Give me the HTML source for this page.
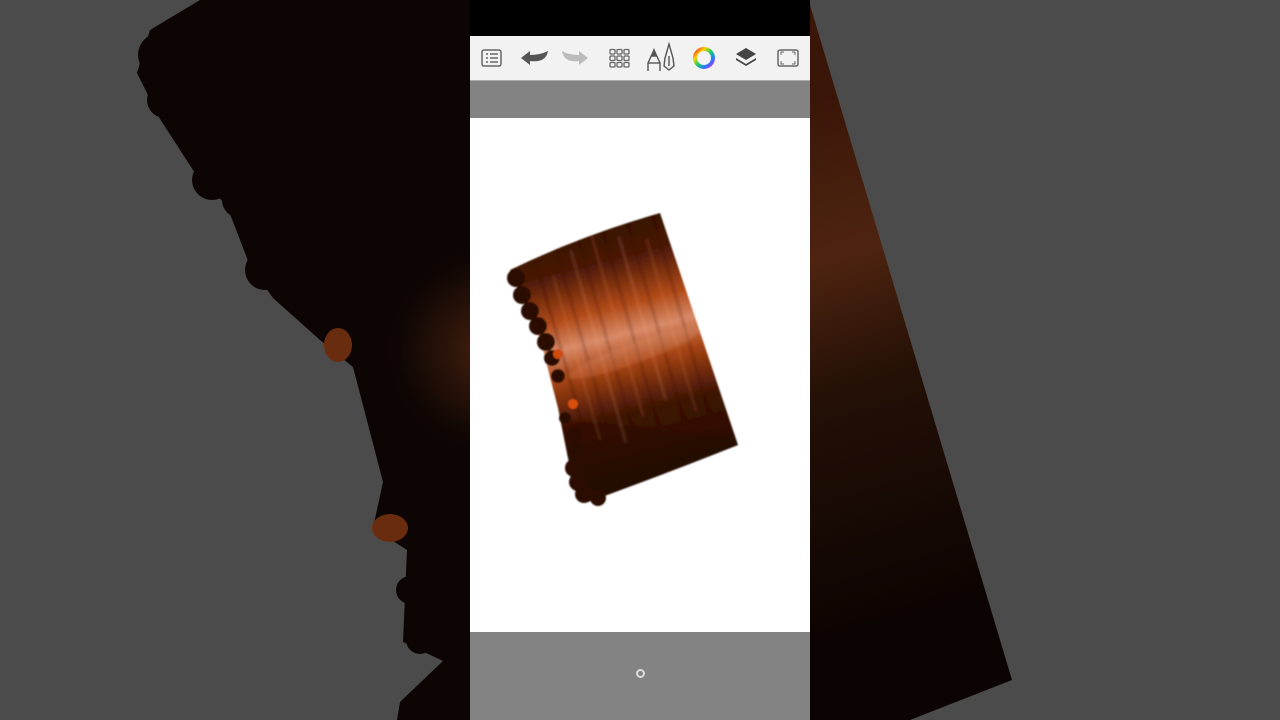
<!DOCTYPE html>
<html><head><meta charset="utf-8"><style>
html,body{margin:0;padding:0;width:1280px;height:720px;overflow:hidden;background:#4b4b4b;font-family:"Liberation Sans",sans-serif}
.abs{position:absolute}
</style></head><body>
<svg class="abs" style="left:0;top:0" width="1280" height="720">
<defs>
<radialGradient id="lg" cx="490" cy="350" r="110" gradientUnits="userSpaceOnUse">
<stop offset="0" stop-color="#5a2a14" stop-opacity="0.8"/><stop offset="0.6" stop-color="#3a1a0c" stop-opacity="0.4"/><stop offset="1" stop-color="#0c0503" stop-opacity="0"/></radialGradient>
<linearGradient id="rg" x1="810" y1="100" x2="960" y2="600" gradientUnits="userSpaceOnUse">
<stop offset="0" stop-color="#3a1608"/><stop offset="0.3" stop-color="#4e2410"/><stop offset="0.55" stop-color="#241006"/><stop offset="1" stop-color="#0c0402"/></linearGradient>
<clipPath id="lc"><path id="lp" d="M200,0 L150,30 L137,73 L160,119 L193,170 L227,206 L250,266 L273,298 L320,340 L353,367 L383,482 L373,528 L407,550 L403,642 L443,661 L400,702 L397,720 L470,720 L470,0 Z"/></clipPath>
</defs>
<g fill="#0c0503">
<use href="#lp"/>
<circle cx="160" cy="55" r="22"/><circle cx="165" cy="100" r="18"/><circle cx="200" cy="130" r="18"/>
<circle cx="212" cy="180" r="20"/><circle cx="240" cy="200" r="18"/><circle cx="265" cy="270" r="20"/>
<circle cx="285" cy="260" r="18"/><circle cx="300" cy="300" r="16"/><circle cx="410" cy="590" r="14"/>
<circle cx="420" cy="640" r="14"/>
</g>
<path d="M340,300 L470,170 L470,560 L400,540 Z" fill="url(#lg)" clip-path="url(#lc)"/>
<ellipse cx="338" cy="345" rx="14" ry="17" fill="#6a2c0e"/>
<ellipse cx="390" cy="528" rx="18" ry="14" fill="#6a2c0e"/>
<path d="M810,5 L1012,680 L910,720 L810,720 Z" fill="url(#rg)"/>
</svg>
<div class="abs" style="left:470px;top:0;width:340px;height:36px;background:#000"></div>
<div class="abs" style="left:470px;top:36px;width:340px;height:44px;background:#f2f2f2"></div>
<div class="abs" style="left:470px;top:80px;width:340px;height:38px;background:#838383;border-top:1px solid #aaa;box-sizing:border-box"></div>
<div class="abs" style="left:470px;top:118px;width:340px;height:514px;background:#fff"></div>
<div class="abs" style="left:470px;top:632px;width:340px;height:88px;background:#838383"></div>
<div class="abs" style="left:636px;top:669px;width:9px;height:9px;border-radius:50%;border:2px solid #ddd;box-sizing:border-box"></div>
<svg class="abs" style="left:470px;top:36px" width="340" height="44">
<g fill="none" stroke="#666" stroke-width="1.5">
<rect x="12" y="14" width="19" height="16" rx="2"/>
<path d="M16 18h2M20 18h8M16 22h2M20 22h8M16 26h2M20 26h8"/>
</g>
<path d="M51 22 L60 15 L60 19 Q70 19 78 15 Q76 27 60 25 L60 29 Z" fill="#555"/>
<path d="M118 22 L109 15 L109 19 Q99 19 92 15 Q94 27 109 25 L109 29 Z" fill="#bbb"/>
<g fill="none" stroke="#666" stroke-width="1.3">
<rect x="140" y="13.5" width="5" height="4.5" rx="1"/><rect x="147" y="13.5" width="5" height="4.5" rx="1"/><rect x="154" y="13.5" width="5" height="4.5" rx="1"/>
<rect x="140" y="20" width="5" height="4.5" rx="1"/><rect x="147" y="20" width="5" height="4.5" rx="1"/><rect x="154" y="20" width="5" height="4.5" rx="1"/>
<rect x="140" y="26.5" width="5" height="4.5" rx="1"/><rect x="147" y="26.5" width="5" height="4.5" rx="1"/><rect x="154" y="26.5" width="5" height="4.5" rx="1"/>
</g>
<g fill="none" stroke="#555" stroke-width="1.4">
<path d="M178 35 L178 27 L184 14 L190 27 L190 35"/><path d="M178 27 L190 27"/>
<path d="M184 14 L182 20 L186 20 Z" fill="#555"/>
<path d="M194 30 L195 22 L199 8 L203 22 L204 30 L199 34 Z"/><path d="M199 20 L199 30"/>
</g>
<defs><linearGradient id="cw" x1="0" y1="0" x2="1" y2="1">
<stop offset="0" stop-color="#ff2020"/><stop offset="0.25" stop-color="#ffd000"/><stop offset="0.5" stop-color="#20d060"/><stop offset="0.75" stop-color="#2080ff"/><stop offset="1" stop-color="#d020ff"/></linearGradient></defs>
<circle cx="234" cy="22" r="9" fill="none" stroke="url(#cw)" stroke-width="4"/>
<path d="M276 12 L286 18 L276 24 L266 18 Z" fill="#444"/>
<path d="M266 22 L276 28 L286 22 L286 24 L276 30 L266 24 Z" fill="#444"/>
<rect x="308" y="14" width="20" height="16" rx="2" fill="none" stroke="#666" stroke-width="1.5"/>
<path d="M311 19v-3h3M325 16h-3M311 25v3h3M325 28h-3M325 16v3M325 28v-3" fill="none" stroke="#666" stroke-width="1"/>
</svg>
<svg class="abs" style="left:470px;top:118px" width="340" height="514">
<defs>
<linearGradient id="h" x1="0.1" y1="0" x2="0.3" y2="1">
<stop offset="0" stop-color="#240b02"/>
<stop offset="0.22" stop-color="#4a1806"/>
<stop offset="0.38" stop-color="#b04a18"/>
<stop offset="0.48" stop-color="#d88a68"/>
<stop offset="0.58" stop-color="#a84414"/>
<stop offset="0.75" stop-color="#3e1404"/>
<stop offset="1" stop-color="#200a02"/>
</linearGradient>
<clipPath id="hc"><path d="M40 152 Q110 118 190 95 L268 327 Q190 358 118 384 L100 350 L88 290 L70 220 Z"/></clipPath>
<filter id="s"><feGaussianBlur stdDeviation="0.8"/></filter>
<filter id="sb"><feGaussianBlur stdDeviation="1.2"/></filter>
</defs>
<g filter="url(#s)">
<path d="M40 152 Q110 118 190 95 L268 327 Q190 358 118 384 L100 350 L88 290 L70 220 Z" fill="url(#h)"/>
<g clip-path="url(#hc)" filter="url(#sb)">
<g transform="rotate(-16 160 240)">
<rect x="95" y="120" width="2" height="180" fill="#2a0a00" opacity="0.35"/>
<rect x="108" y="140" width="1.5" height="170" fill="#ff9a60" opacity="0.25"/>
<rect x="118" y="100" width="2" height="200" fill="#2a0a00" opacity="0.3"/>
<rect x="132" y="120" width="1.5" height="200" fill="#ffb080" opacity="0.3"/>
<rect x="142" y="90" width="2" height="220" fill="#2a0a00" opacity="0.3"/>
<rect x="156" y="110" width="1.5" height="190" fill="#ff8a50" opacity="0.3"/>
<rect x="168" y="90" width="2" height="230" fill="#2a0a00" opacity="0.3"/>
<rect x="182" y="120" width="1.5" height="170" fill="#ffb090" opacity="0.3"/>
<rect x="194" y="100" width="2" height="220" fill="#2a0a00" opacity="0.3"/>
<rect x="208" y="130" width="1.5" height="180" fill="#ff9a60" opacity="0.25"/>
<rect x="220" y="110" width="2" height="210" fill="#2a0a00" opacity="0.3"/>
</g>
<ellipse cx="165" cy="235" rx="70" ry="10" transform="rotate(-20 165 235)" fill="#e8a080" opacity="0.2"/>
<path d="M80 300 L270 320 L270 400 L100 400 Z" fill="#200800" opacity="0.3"/>
</g>
<g fill="#2a0e04">
<circle cx="46" cy="160" r="9"/><circle cx="52" cy="177" r="9"/><circle cx="60" cy="193" r="9"/>
<circle cx="68" cy="208" r="9"/><circle cx="76" cy="224" r="9"/><circle cx="82" cy="240" r="8"/>
<circle cx="88" cy="258" r="7"/><circle cx="95" cy="300" r="6"/>
<circle cx="104" cy="318" r="8"/><circle cx="106" cy="334" r="9"/><circle cx="104" cy="350" r="9"/>
<circle cx="108" cy="364" r="9"/><circle cx="114" cy="376" r="9"/><circle cx="128" cy="380" r="8"/>
</g>
<circle cx="88" cy="236" r="5" fill="#d04a10"/><circle cx="103" cy="286" r="5" fill="#d85010"/>
</g>
</svg>
</body></html>
